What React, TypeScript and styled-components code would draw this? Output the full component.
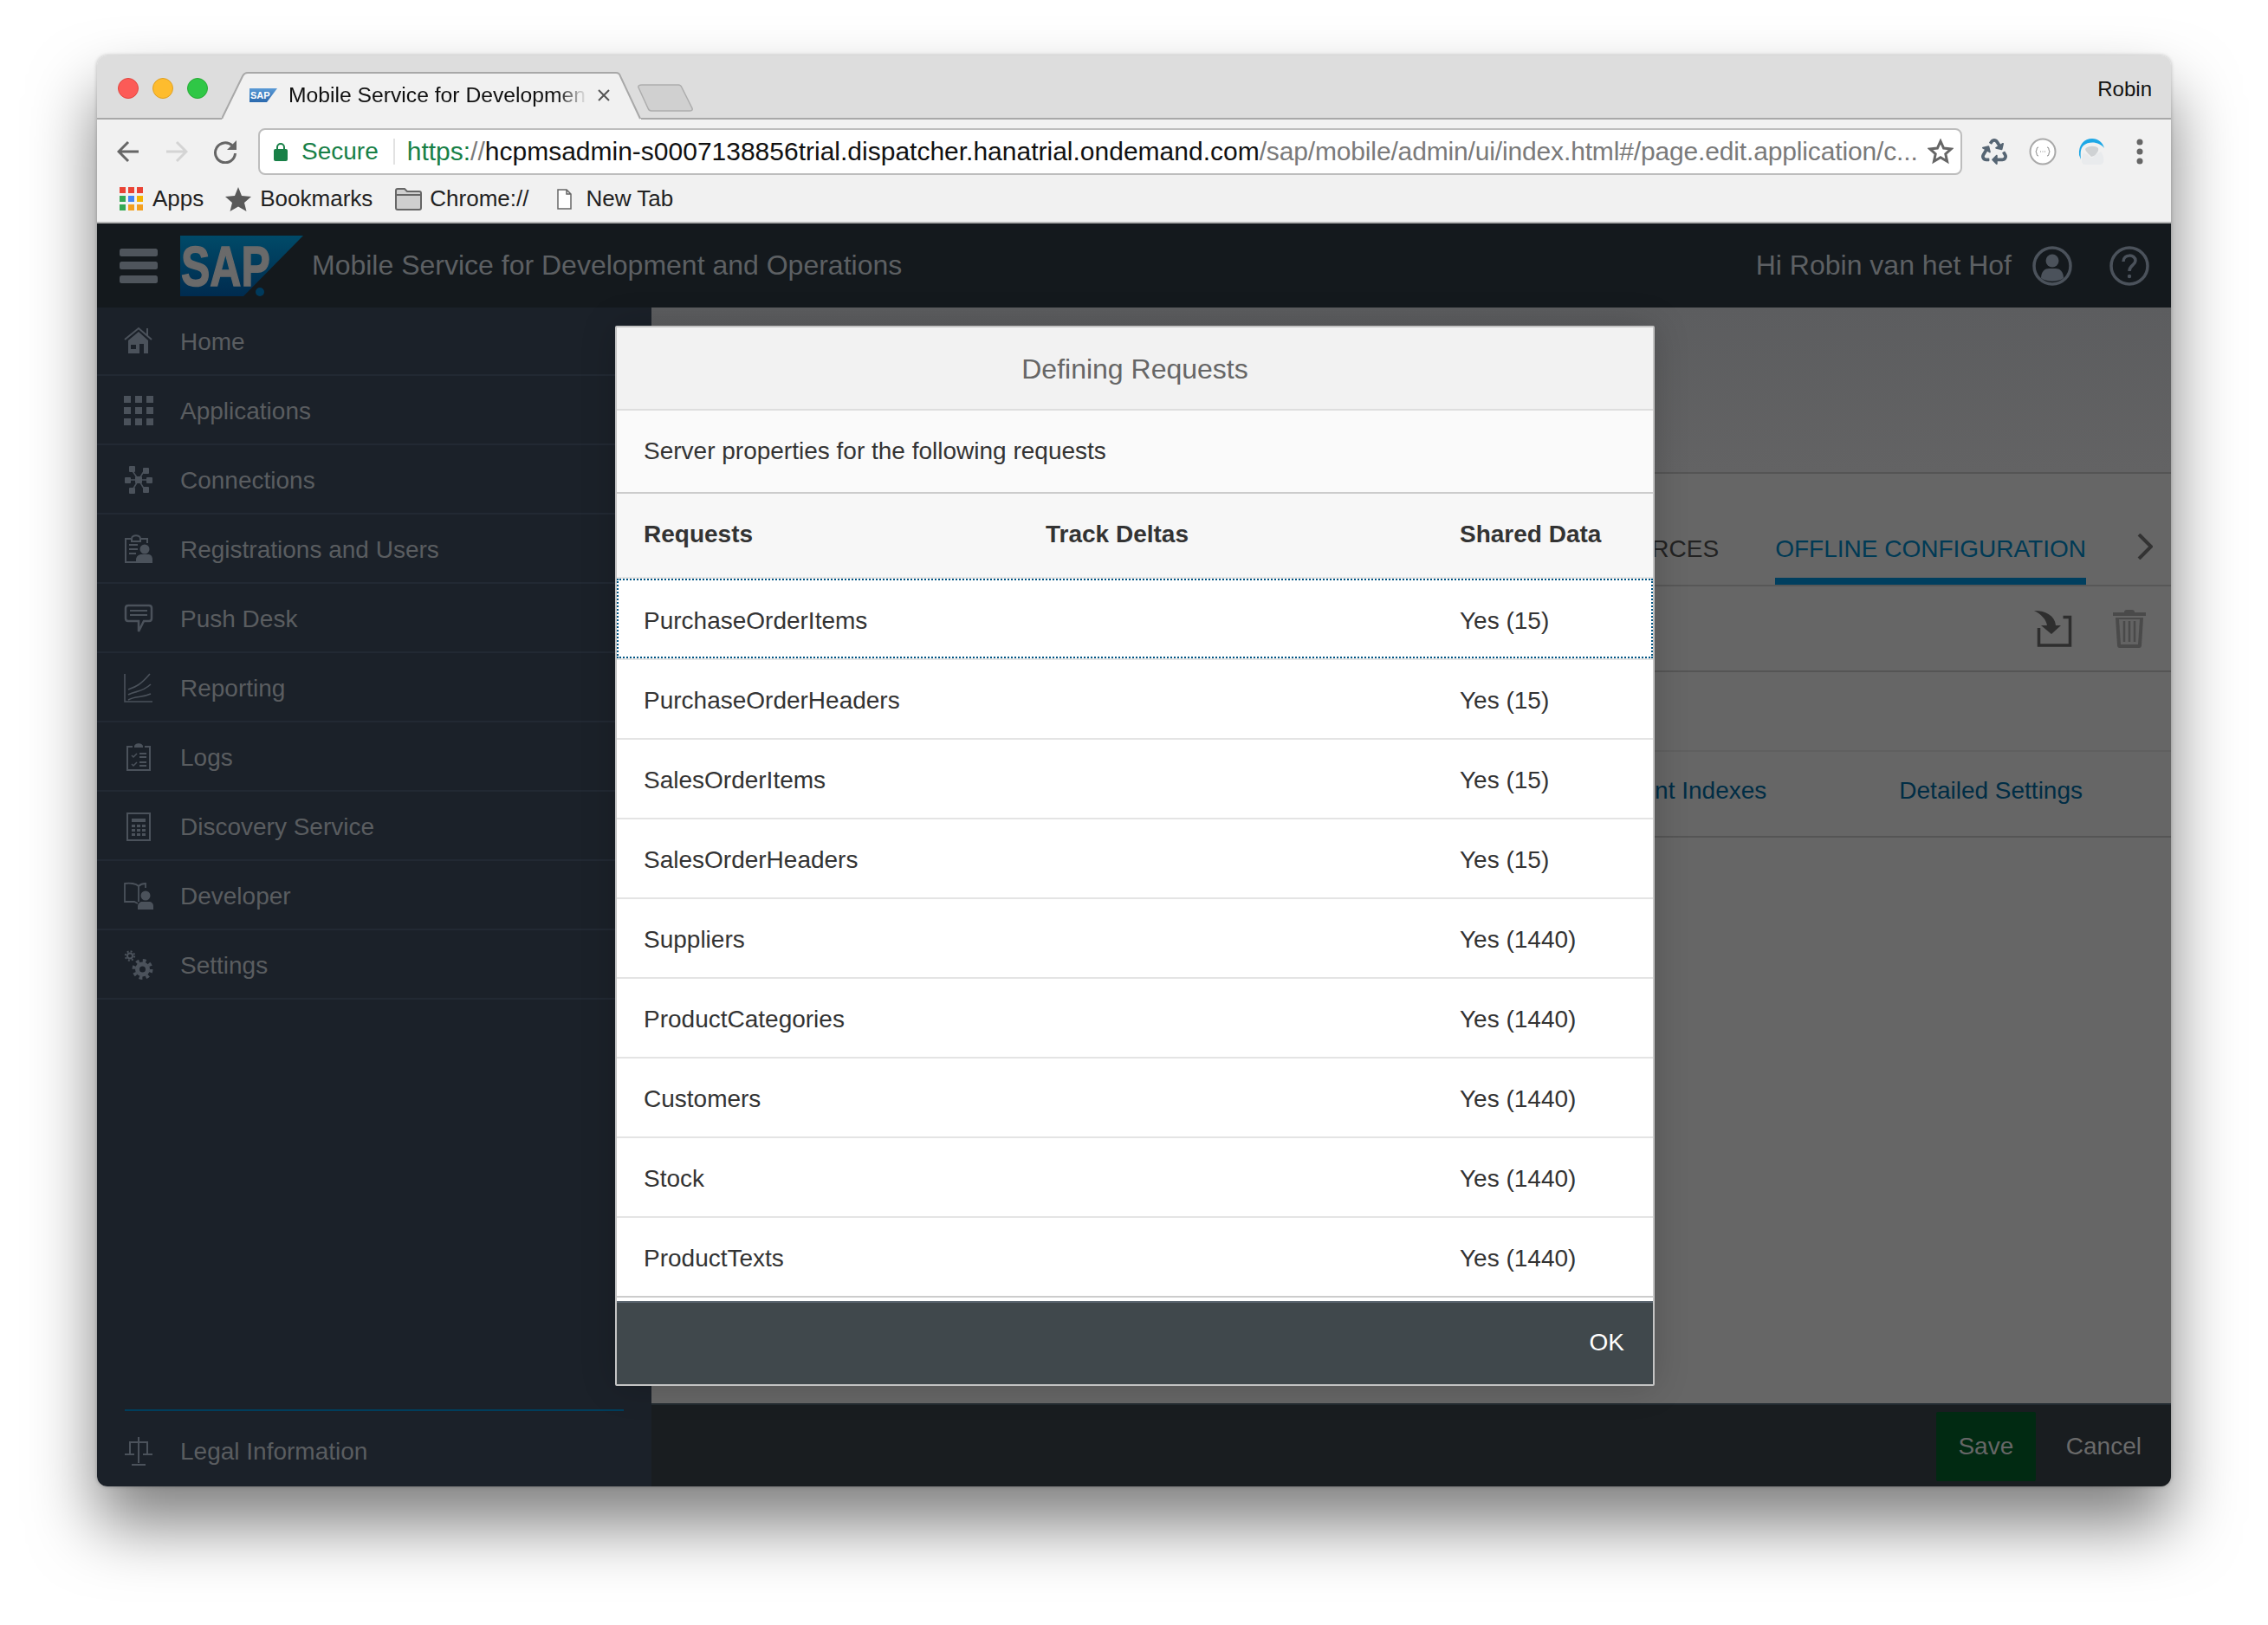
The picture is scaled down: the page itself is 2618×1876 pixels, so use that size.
import type { ReactNode } from 'react';
import styled, { createGlobalStyle } from 'styled-components';
import { FaRecycle } from 'react-icons/fa';

const ICON = '#4b525b';

const GlobalStyle = createGlobalStyle`
  html, body {
    margin: 0;
    background: #fff;
    font-family: "Liberation Sans", Arial, sans-serif;
  }
  * { box-sizing: border-box; }
`;

const Page = styled.div`
  width: 2618px;
  height: 1876px;
  padding: 64px 112px 160px;
  overflow: hidden;
`;
const Window = styled.div`
  height: 1652px;
  display: flex;
  flex-direction: column;
  border-radius: 12px;
  overflow: hidden;
  box-shadow: 0 44px 76px rgba(0, 0, 0, 0.5), 0 0 4px rgba(0, 0, 0, 0.25);
`;

/* browser chrome */
const TabStrip = styled.div`
  height: 74px;
  flex: none;
  display: flex;
  align-items: flex-end;
  background: #ddd;
  box-shadow: inset 0 -2px 0 #a8a8a8;
`;
const Lights = styled.div`
  align-self: flex-start;
  display: flex;
  gap: 16px;
  margin: 26px 16px 0 24px;
`;
const Light = styled.span<{ $bg: string; $edge: string }>`
  width: 24px;
  height: 24px;
  border-radius: 50%;
  background: ${({ $bg }) => $bg};
  border: 1px solid ${({ $edge }) => $edge};
`;
const Tab = styled.div`
  position: relative;
  width: 484px;
  height: 55px;
  display: flex;
  align-items: center;
  padding: 0 0 2px 32px;
`;
const TabShape = styled.svg`
  position: absolute;
  inset: 0;
`;
const TabIcon = styled.svg`
  position: relative;
  flex: none;
  margin-right: 13px;
`;
const TabTitle = styled.span`
  position: relative;
  width: 345px;
  white-space: nowrap;
  font-size: 24.7px;
  line-height: 32px;
  color: #111;
  -webkit-mask-image: linear-gradient(90deg, #000 90%, transparent 100%);
  mask-image: linear-gradient(90deg, #000 90%, transparent 100%);
`;
const TabClose = styled.svg`
  position: relative;
  margin-left: 12px;
`;
const NewTab = styled.svg`
  margin: 0 0 9px -5px;
`;
const Profile = styled.span`
  align-self: flex-start;
  margin: 25px 22px 0 auto;
  font-size: 24px;
  line-height: 28px;
  color: #111;
`;
const Toolbar = styled.div`
  height: 120px;
  flex: none;
  display: flex;
  flex-direction: column;
  background: #f1f1f1;
  border-bottom: 2px solid #b4b4b4;
`;
const AddressRow = styled.div`
  height: 73px;
  display: flex;
  align-items: flex-start;
  padding: 10px 8px 0;
`;
const NavButton = styled.div`
  width: 56px;
  height: 54px;
  flex: none;
  display: flex;
  align-items: center;
  justify-content: center;
`;
const Omnibox = styled.div`
  flex: 1;
  height: 54px;
  margin: 0 9px 0 10px;
  display: flex;
  align-items: center;
  padding-left: 16px;
  background: #fff;
  border: 2px solid #bdbdbd;
  border-radius: 8px;
  white-space: nowrap;
`;
const Secure = styled.span`
  margin-left: 16px;
  padding-right: 17px;
  border-right: 2px solid #e2e2e2;
  font-size: 28px;
  line-height: 30px;
  color: #188047;
`;
const Url = styled.span`
  flex: 1;
  margin-left: 14px;
  font-size: 30px;
  color: #7a7a7a;
`;
const UrlScheme = styled.span`
  color: #188047;
`;
const UrlHost = styled.span`
  color: #111;
`;
const UrlPath = styled.span`
  letter-spacing: -0.15px;
`;
const StarIcon = styled.svg`
  margin-right: 8px;
`;
const Bookmarks = styled.div`
  flex: 1;
  display: flex;
  align-items: center;
  padding: 0 0 8px 26px;
`;
const Bookmark = styled.div<{ $left?: number; $gap?: number }>`
  display: flex;
  align-items: center;
  gap: ${({ $gap }) => $gap ?? 10}px;
  margin-left: ${({ $left }) => $left ?? 0}px;
  font-size: 26px;
  color: #222;
`;

/* application */
const AppArea = styled.div`
  position: relative;
  flex: 1;
  min-height: 0;
  display: flex;
  flex-direction: column;
`;
const Header = styled.header`
  height: 97px;
  flex: none;
  display: flex;
  align-items: center;
  padding: 0 25px 0 26px;
  background: #14191d;
  font-size: 32px;
  color: #5d6063;
`;
const Logo = styled.svg`
  margin: 0 10px 0 26px;
`;
const Greeting = styled.span`
  margin: 0 24px 0 auto;
`;
const HelpIcon = styled.svg`
  margin-left: 43px;
`;
const Body = styled.div`
  flex: 1;
  min-height: 0;
  display: flex;
`;
const Sidebar = styled.nav`
  width: 640px;
  flex: none;
  display: flex;
  flex-direction: column;
  background: #1b2129;
`;
const NavItem = styled.div`
  height: 80px;
  flex: none;
  display: flex;
  align-items: center;
  gap: 31px;
  padding: 3px 0 0 31px;
  border-bottom: 2px solid #222933;
  font-size: 28px;
  color: #5a5d60;
  &:first-child {
    height: 79px;
    padding-top: 2px;
  }
`;
const SideIcon = styled.svg`
  width: 34px;
  height: 34px;
  flex: none;
  margin-top: -2px;
  color: ${ICON};
`;
const SidebarRule = styled.div`
  width: 576px;
  height: 2px;
  flex: none;
  margin: auto 0 0 32px;
  background: #003e5c;
`;
const LegalItem = styled(NavItem)`
  height: 87px;
  padding-top: 6px;
  border-bottom: 0;
`;
const Main = styled.main`
  flex: 1;
  display: flex;
  flex-direction: column;
  background: #666;
`;
const TopBand = styled.div`
  height: 192px;
  flex: none;
  background: linear-gradient(#5c5d5f, #636364);
  border-bottom: 2px solid #555;
`;
const TabsRow = styled.div`
  height: 130px;
  flex: none;
  display: flex;
  justify-content: flex-end;
  align-items: flex-end;
  gap: 65px;
  padding-right: 21px;
  border-bottom: 2px solid #575757;
`;
const PageTab = styled.div<{ $active?: boolean }>`
  padding-bottom: 17px;
  border-bottom: 8px solid ${({ $active }) => ($active ? '#003f5f' : 'transparent')};
  font-size: 28px;
  line-height: 32px;
  color: ${({ $active }) => ($active ? '#003a55' : '#222')};
`;
const TabsChevron = styled.svg`
  margin: 0 0 29px -6px;
`;
const ActionsRow = styled.div`
  height: 99px;
  flex: none;
  display: flex;
  justify-content: flex-end;
  align-items: center;
  gap: 46px;
  padding-right: 28px;
  border-bottom: 2px solid #555;
`;
const BlankRow = styled.div`
  height: 92px;
  flex: none;
  border-bottom: 2px solid #606060;
`;
const SubTabs = styled.div`
  height: 99px;
  flex: none;
  display: flex;
  justify-content: flex-end;
  align-items: center;
  gap: 153px;
  padding: 0 102px 7px 0;
  border-bottom: 2px solid #555;
  font-size: 28px;
  color: #002d45;
`;
const ActionBar = styled.div`
  margin-top: auto;
  height: 96px;
  flex: none;
  display: flex;
  justify-content: flex-end;
  align-items: center;
  gap: 35px;
  padding: 2px 34px 0 0;
  background: #191d20;
  border-top: 2px solid #222a30;
  font-size: 28px;
  color: #6a6a6a;
`;
const SaveButton = styled.div`
  width: 115px;
  height: 80px;
  display: flex;
  align-items: center;
  justify-content: center;
  border-radius: 2px;
  background: #012a12;
  color: #666;
`;

/* dialog */
const Overlay = styled.div`
  position: absolute;
  inset: 0;
  display: flex;
  justify-content: center;
  align-items: flex-start;
  padding: 118px 0 0 2px;
`;
const Dialog = styled.section`
  width: 1200px;
  border: 2px solid #c4c4c4;
  border-radius: 2px;
  background: #fff;
  box-shadow: 0 0 40px rgba(0, 0, 0, 0.18);
  font-size: 28px;
  color: #333;
`;
const DialogTitle = styled.h2`
  height: 96px;
  margin: 0;
  display: flex;
  align-items: center;
  justify-content: center;
  padding-top: 2px;
  background: #f2f2f2;
  border-bottom: 2px solid #dedede;
  font-size: 32px;
  font-weight: 400;
  color: #666;
`;
const DialogInfo = styled.p`
  height: 96px;
  margin: 0;
  display: flex;
  align-items: center;
  padding-left: 31px;
  background: #fafafa;
  border-bottom: 2px solid #ccc;
`;
const TableRow = styled.div`
  display: grid;
  grid-template-columns: 464px 478px 1fr;
  align-items: center;
  padding-left: 31px;
`;
const TableHead = styled(TableRow)`
  height: 98px;
  padding-bottom: 2px;
  background: #f7f7f7;
  border-bottom: 2px solid #e4e4e4;
  font-weight: 700;
`;
const TableBody = styled.div`
  padding: 2px 0 4px;
`;
const DataRow = styled(TableRow)<{ $focused?: boolean }>`
  position: relative;
  height: 92px;
  padding-top: 3px;
  border-bottom: 2px solid #e4e4e4;
  &:last-child {
    border-bottom-color: #ccc;
  }
  ${({ $focused }) =>
    $focused &&
    `&::after {
      content: '';
      position: absolute;
      inset: -2px 0 0;
      border: 2px dotted #005483;
    }`}
`;
const DialogFooter = styled.div`
  height: 96px;
  display: flex;
  justify-content: flex-end;
  align-items: center;
  padding: 0 33px 2px 0;
  background: #40484c;
  border-top: 2px solid #5b6670;
  color: #fff;
`;

const rows = [
  ['PurchaseOrderItems', 'Yes (15)'],
  ['PurchaseOrderHeaders', 'Yes (15)'],
  ['SalesOrderItems', 'Yes (15)'],
  ['SalesOrderHeaders', 'Yes (15)'],
  ['Suppliers', 'Yes (1440)'],
  ['ProductCategories', 'Yes (1440)'],
  ['Customers', 'Yes (1440)'],
  ['Stock', 'Yes (1440)'],
  ['ProductTexts', 'Yes (1440)'],
];

const Gears = () => (
  <>
    <circle cx="21.5" cy="22" r="6" fill="none" stroke="currentColor" strokeWidth="5" />
    <circle cx="21.5" cy="22" r="10" fill="none" stroke="currentColor" strokeWidth="4" strokeDasharray="3.8 4.05" />
    <circle cx="7" cy="6.5" r="3" fill="none" stroke="currentColor" strokeWidth="2" />
    <circle cx="7" cy="6.5" r="5.2" fill="none" stroke="currentColor" strokeWidth="2" strokeDasharray="2 2.08" />
  </>
);

const sideIcons: Record<string, ReactNode> = {
  Home: (
    <>
      <path d="M1 15 17 2l15 13" fill="none" stroke="currentColor" strokeWidth="2" />
      <path d="M26 2h2v9h-2z" fill="currentColor" />
      <path fillRule="evenodd" fill="currentColor" d="M5 16 17 6l11 10v15h-5V20h-5v11H5zm3 5v5h6v-5z" />
    </>
  ),
  Applications: (
    <g fill="currentColor">
      {[0, 13, 26].map((y) =>
        [0, 13, 26].map((x) => <rect key={`${x}-${y}`} x={x} y={y} width="8" height="8" />),
      )}
    </g>
  ),
  Connections: (
    <>
      <path d="M17 17 8 4M17 17l8-13M17 17H4M17 17h13M17 17l-8 13M17 17l8 13" stroke="currentColor" strokeWidth="1.5" />
      <g fill="currentColor">
        <rect x="13" y="13" width="8" height="8" rx="1" />
        <rect x="6" y="1" width="7" height="7" rx="1" />
        <rect x="22" y="3" width="7" height="7" rx="1" />
        <rect x="1" y="14" width="7" height="7" rx="1" />
        <rect x="26" y="14" width="7" height="7" rx="1" />
        <rect x="6" y="26" width="7" height="7" rx="1" />
        <rect x="22" y="25" width="7" height="7" rx="1" />
      </g>
    </>
  ),
  'Registrations and Users': (
    <>
      <path d="M17 32H2V5h6M20 5h7v5" fill="none" stroke="currentColor" strokeWidth="2" />
      <path d="M9 5c0-5 10-5 10 0v3H9z" fill="none" stroke="currentColor" strokeWidth="2" />
      <path d="M6 12h10M6 17h10M6 22h8" stroke="currentColor" strokeWidth="2" />
      <circle cx="24" cy="17" r="5.5" fill="currentColor" />
      <path d="M14 33v-4c0-4 4-6 6-6h8c3 0 5 2 5 6v4z" fill="currentColor" />
    </>
  ),
  'Push Desk': (
    <>
      <path d="M5 2h24c2 0 3 1 3 3v12c0 2-1 3-3 3h-6l-6 12v-12H5c-2 0-3-1-3-3V5c0-2 1-3 3-3z" fill="none" stroke="currentColor" strokeWidth="2.5" />
      <path d="M7 8h20M7 13h20" stroke="currentColor" strokeWidth="2" />
    </>
  ),
  Reporting: (
    <path d="M1 1v32h32M5 19C13 16 18 15 30 1M5 25c9-5 15-2 26-12M5 31c9-5 15-2 26-7" fill="none" stroke="currentColor" strokeWidth="1.6" />
  ),
  Logs: (
    <>
      <path d="M10 5H4v27h26V5h-6" fill="none" stroke="currentColor" strokeWidth="2" />
      <path d="M12 5c0-5 10-5 10 0v1H12z" fill="currentColor" />
      <path d="m9 15 2 2 4-4M9 25l2 2 4-4" fill="none" stroke="currentColor" strokeWidth="1.5" />
      <path d="M18 13h8M18 17h8M18 23h8M18 27h8" stroke="currentColor" strokeWidth="2" />
    </>
  ),
  'Discovery Service': (
    <>
      <rect x="4" y="2" width="26" height="31" fill="none" stroke="currentColor" strokeWidth="2" />
      <rect x="9" y="8" width="16" height="4" fill="currentColor" />
      <g fill="currentColor">
        {[15, 20, 25].map((y) =>
          [9, 15, 21].map((x) => <rect key={`${x}-${y}`} x={x} y={y} width="4" height="3" />),
        )}
      </g>
    </>
  ),
  Developer: (
    <>
      <path d="M17 6C14 3 7 2 1 3v21h11l4 2M17 6v18M17 6c3-3 6-3 8-3v5" fill="none" stroke="currentColor" strokeWidth="1.8" />
      <circle cx="25" cy="17" r="5.5" fill="currentColor" />
      <path d="M16 33v-4c0-3 3-5 5-5h8c3 0 5 2 5 5v4z" fill="currentColor" />
    </>
  ),
  Settings: <Gears />,
  Legal: (
    <path d="M17 1v30M9 33h16M6 7h22M7 7v13M27 7v13M1 21h11M22 21h11" fill="none" stroke="currentColor" strokeWidth="2" />
  ),
};

const navItems = [
  'Home',
  'Applications',
  'Connections',
  'Registrations and Users',
  'Push Desk',
  'Reporting',
  'Logs',
  'Discovery Service',
  'Developer',
  'Settings',
];

function App() {
  return (
    <Page>
      <GlobalStyle />
      <Window>
        <TabStrip>
          <Lights>
            <Light $bg="#fc5b57" $edge="#e2463f" />
            <Light $bg="#febc2e" $edge="#dfa023" />
            <Light $bg="#2fc746" $edge="#27aa35" />
          </Lights>
          <Tab>
            <TabShape width="484" height="55">
              <path d="M0 54h1L24 5q2-4 6-4h425q4 0 5 4l23 49h1v1H0z" fill="#f1f1f1" />
              <path d="M0 54 24 5q2-4 6-4h425q4 0 5 4l23 49" fill="none" stroke="#a8a8a8" strokeWidth="2" />
            </TabShape>
            <TabIcon width="32" height="16" viewBox="0 0 32 16">
              <defs>
                <linearGradient id="fav" x1="0" y1="0" x2="0" y2="1">
                  <stop offset="0" stopColor="#5a9ad6" />
                  <stop offset="1" stopColor="#2a69ae" />
                </linearGradient>
              </defs>
              <path d="M0 0h32L20 16H0z" fill="url(#fav)" />
              <text x="1" y="12" fontSize="11" fontWeight="700" fill="#fff">
                SAP
              </text>
            </TabIcon>
            <TabTitle>Mobile Service for Developmen</TabTitle>
            <TabClose width="14" height="14" viewBox="0 0 14 14">
              <path d="m1 1 12 12M13 1 1 13" stroke="#555" strokeWidth="2" />
            </TabClose>
          </Tab>
          <NewTab width="66" height="32" viewBox="0 0 66 32">
            <path d="M6 1h42q3 0 4 3l12 24q1 3-3 3H17q-3 0-4-3L2 4Q1 1 6 1z" fill="#d0d0d0" stroke="#adadad" strokeWidth="1.5" />
          </NewTab>
          <Profile>Robin</Profile>
        </TabStrip>

        <Toolbar>
          <AddressRow>
            <NavButton>
              <svg width="26" height="26" viewBox="0 0 26 26">
                <path d="M25 13H3M13 2 2 13l11 11" fill="none" stroke="#666" strokeWidth="3" />
              </svg>
            </NavButton>
            <NavButton>
              <svg width="26" height="26" viewBox="0 0 26 26">
                <path d="M1 13h22M13 2l11 11-11 11" fill="none" stroke="#d4d4d4" strokeWidth="3" />
              </svg>
            </NavButton>
            <NavButton>
              <svg width="28" height="28" viewBox="0 0 28 28">
                <path d="M22 7a11.5 11.5 0 1 0 3.5 9" fill="none" stroke="#666" strokeWidth="3" />
                <path d="M27 1v11H16z" fill="#666" />
              </svg>
            </NavButton>
            <Omnibox>
              <svg width="16" height="22" viewBox="0 0 16 22">
                <path d="M4 9V6a4 4 0 0 1 8 0v3" fill="none" stroke="#188047" strokeWidth="2" />
                <rect y="8" width="16" height="14" rx="2" fill="#188047" />
              </svg>
              <Secure>Secure</Secure>
              <Url>
                <UrlScheme>https:</UrlScheme>//
                <UrlHost>hcpmsadmin-s0007138856trial.dispatcher.hanatrial.ondemand.com</UrlHost>
                <UrlPath>/sap/mobile/admin/ui/index.html#/page.edit.application/c...</UrlPath>
              </Url>
              <StarIcon width="30" height="30" viewBox="0 0 30 30">
                <path d="m15 3 3.6 8 8.6.9-6.4 5.8 1.8 8.5L15 21.8l-7.6 4.4 1.8-8.5-6.4-5.8 8.6-.9z" fill="none" stroke="#666" strokeWidth="3" />
              </StarIcon>
            </Omnibox>
            <NavButton>
              <FaRecycle size={30} color="#566573" />
            </NavButton>
            <NavButton>
              <svg width="32" height="32" viewBox="0 0 32 32">
                <circle cx="16" cy="16" r="14.5" fill="#fff" stroke="#a9a9a9" strokeWidth="2" />
                <path d="M11 11q-2 0-2 2v1l-1 2 1 2v1q0 2 2 2M21 11q2 0 2 2v1l1 2-1 2v1q0 2-2 2" fill="none" stroke="#888" strokeWidth="1" />
                <path d="M13 16h1M15.5 16h1M18 16h1" stroke="#888" strokeWidth="1" />
              </svg>
            </NavButton>
            <NavButton>
              <svg width="32" height="32" viewBox="0 0 32 32">
                <path d="M2 20C1 8 8 1 17 1c7 0 12 4 14 11C26 5 14 3 7 9 4 12 3 16 4 25z" fill="#1ea8e6" />
                <path d="M7 17c3 2 5 2 8 6h3c2-4 6-5 9-7 3 4 4 8 3 12-1 3-3 3-5 3H9c-3 0-4-2-4-4 0-4 1-7 2-10z" fill="#e9ebed" />
                <path d="M9 13c3-4 12-4 15-1 1 3-2 7-5 9l-3 1c-2-3-6-5-7-9z" fill="#cfd2d4" />
              </svg>
            </NavButton>
            <NavButton>
              <svg width="8" height="30" viewBox="0 0 8 30">
                <circle cx="4" cy="4" r="3.5" fill="#666" />
                <circle cx="4" cy="15" r="3.5" fill="#666" />
                <circle cx="4" cy="26" r="3.5" fill="#666" />
              </svg>
            </NavButton>
          </AddressRow>
          <Bookmarks>
            <Bookmark $gap={11}>
              <svg width="27" height="27" viewBox="0 0 27 27">
                {['#ea4335', '#ea4335', '#ea4335', '#34a853', '#4285f4', '#f4b400', '#34a853', '#f4a020', '#f4a020'].map(
                  (fill, i) => (
                    <rect key={i} x={(i % 3) * 10} y={Math.floor(i / 3) * 10} width="7" height="7" fill={fill} />
                  ),
                )}
              </svg>
              Apps
            </Bookmark>
            <Bookmark $left={25}>
              <svg width="30" height="28" viewBox="0 0 30 28">
                <path d="m15 0 4 10 11 1-8 7 2.5 10L15 22.5 5.5 28 8 18l-8-7 11-1z" fill="#595959" />
              </svg>
              Bookmarks
            </Bookmark>
            <Bookmark $left={26} $gap={9}>
              <svg width="31" height="26" viewBox="0 0 31 26">
                <path d="M1 3q0-2 2-2h8l3 3h14q2 0 2 2v17q0 2-2 2H3q-2 0-2-2z" fill="#cfcfcf" stroke="#666" strokeWidth="2" />
                <path d="M1 8h29" stroke="#666" strokeWidth="2" />
              </svg>
              Chrome://
            </Bookmark>
            <Bookmark $left={33} $gap={16}>
              <svg width="17" height="24" viewBox="0 0 17 24">
                <path d="M1 1h10l5 5v17H1zM11 1v5h5" fill="#fff" stroke="#666" strokeWidth="1.5" />
              </svg>
              New Tab
            </Bookmark>
          </Bookmarks>
        </Toolbar>

        <AppArea>
          <Header>
            <svg width="44" height="40" viewBox="0 0 44 40">
              <rect width="44" height="9" rx="2.5" fill="#4f555c" />
              <rect y="15" width="44" height="9" rx="2.5" fill="#4f555c" />
              <rect y="31" width="44" height="9" rx="2.5" fill="#4f555c" />
            </svg>
            <Logo width="142" height="70" viewBox="0 0 142 70">
              <defs>
                <linearGradient id="sap" x1="0" y1="0" x2="0" y2="1">
                  <stop offset="0" stopColor="#004a68" />
                  <stop offset="1" stopColor="#002b4f" />
                </linearGradient>
              </defs>
              <path d="M0 0h142L73 70H0z" fill="url(#sap)" />
              <text
                transform="translate(1 58) scale(1 1.3)"
                fontSize="50"
                fontWeight="700"
                fill="#6a6a6a"
                stroke="#6a6a6a"
                strokeWidth="1.2"
              >
                SAP
              </text>
              <circle cx="92" cy="65" r="5" fill="#003a5c" />
            </Logo>
            Mobile Service for Development and Operations
            <Greeting>Hi Robin van het Hof</Greeting>
            <svg width="46" height="46" viewBox="0 0 46 46">
              <circle cx="23" cy="23" r="21" fill="none" stroke={ICON} strokeWidth="3.5" />
              <circle cx="23" cy="17" r="7.5" fill={ICON} />
              <path d="M10 37c0-8 5-11 9-11h8c4 0 9 3 9 11-7 5-19 5-26 0z" fill={ICON} />
            </svg>
            <HelpIcon width="46" height="46" viewBox="0 0 46 46">
              <circle cx="23" cy="23" r="21" fill="none" stroke={ICON} strokeWidth="3.5" />
              <path d="M16 18c0-9 14-9 14-1 0 5-7 5-7 12" fill="none" stroke={ICON} strokeWidth="3.5" />
              <circle cx="23" cy="35" r="2.2" fill={ICON} />
            </HelpIcon>
          </Header>
          <Body>
            <Sidebar>
              {navItems.map((label) => (
                <NavItem key={label}>
                  <SideIcon viewBox="0 0 34 34">{sideIcons[label]}</SideIcon>
                  {label}
                </NavItem>
              ))}
              <SidebarRule />
              <LegalItem>
                <SideIcon viewBox="0 0 34 34">{sideIcons.Legal}</SideIcon>
                Legal Information
              </LegalItem>
            </Sidebar>
            <Main>
              <TopBand />
              <TabsRow>
                <PageTab>RESOURCES</PageTab>
                <PageTab $active>OFFLINE CONFIGURATION</PageTab>
                <TabsChevron width="18" height="30" viewBox="0 0 18 30">
                  <path d="m2 1 14 14L2 29" fill="none" stroke="#333" strokeWidth="4" />
                </TabsChevron>
              </TabsRow>
              <ActionsRow>
                <svg width="44" height="42" viewBox="0 0 44 42">
                  <path d="M5.5 20v20h36V7.5h-8" fill="none" stroke="#2e2e2e" strokeWidth="3.5" />
                  <path d="M0 0c14 0 24 6 25 17h6L20 27 8 17h7C14 10 8 4 0 0z" fill="#2e2e2e" />
                </svg>
                <svg width="40" height="44" viewBox="0 0 40 44">
                  <path d="M14 3q0-3 3-3h6q3 0 3 3h13v4H1V3zM4 9h32l-2 32q0 3-3 3H9q-3 0-3-3z" fill="#4a4a4a" />
                  <path d="M8 11h24l-2 29H10z" fill="#636363" />
                  <path d="M14 13v24M20 13v24M26 13v24" stroke="#4a4a4a" strokeWidth="2.5" />
                </svg>
              </ActionsRow>
              <BlankRow />
              <SubTabs>
                <span>Client Indexes</span>
                <span>Detailed Settings</span>
              </SubTabs>
              <ActionBar>
                <SaveButton>Save</SaveButton>
                <span>Cancel</span>
              </ActionBar>
            </Main>
          </Body>
          <Overlay>
            <Dialog>
              <DialogTitle>Defining Requests</DialogTitle>
              <DialogInfo>Server properties for the following requests</DialogInfo>
              <TableHead>
                <span>Requests</span>
                <span>Track Deltas</span>
                <span>Shared Data</span>
              </TableHead>
              <TableBody>
                {rows.map(([name, shared], i) => (
                  <DataRow key={name} $focused={i === 0}>
                    <span>{name}</span>
                    <span />
                    <span>{shared}</span>
                  </DataRow>
                ))}
              </TableBody>
              <DialogFooter>OK</DialogFooter>
            </Dialog>
          </Overlay>
        </AppArea>
      </Window>
    </Page>
  );
}

export default App;
